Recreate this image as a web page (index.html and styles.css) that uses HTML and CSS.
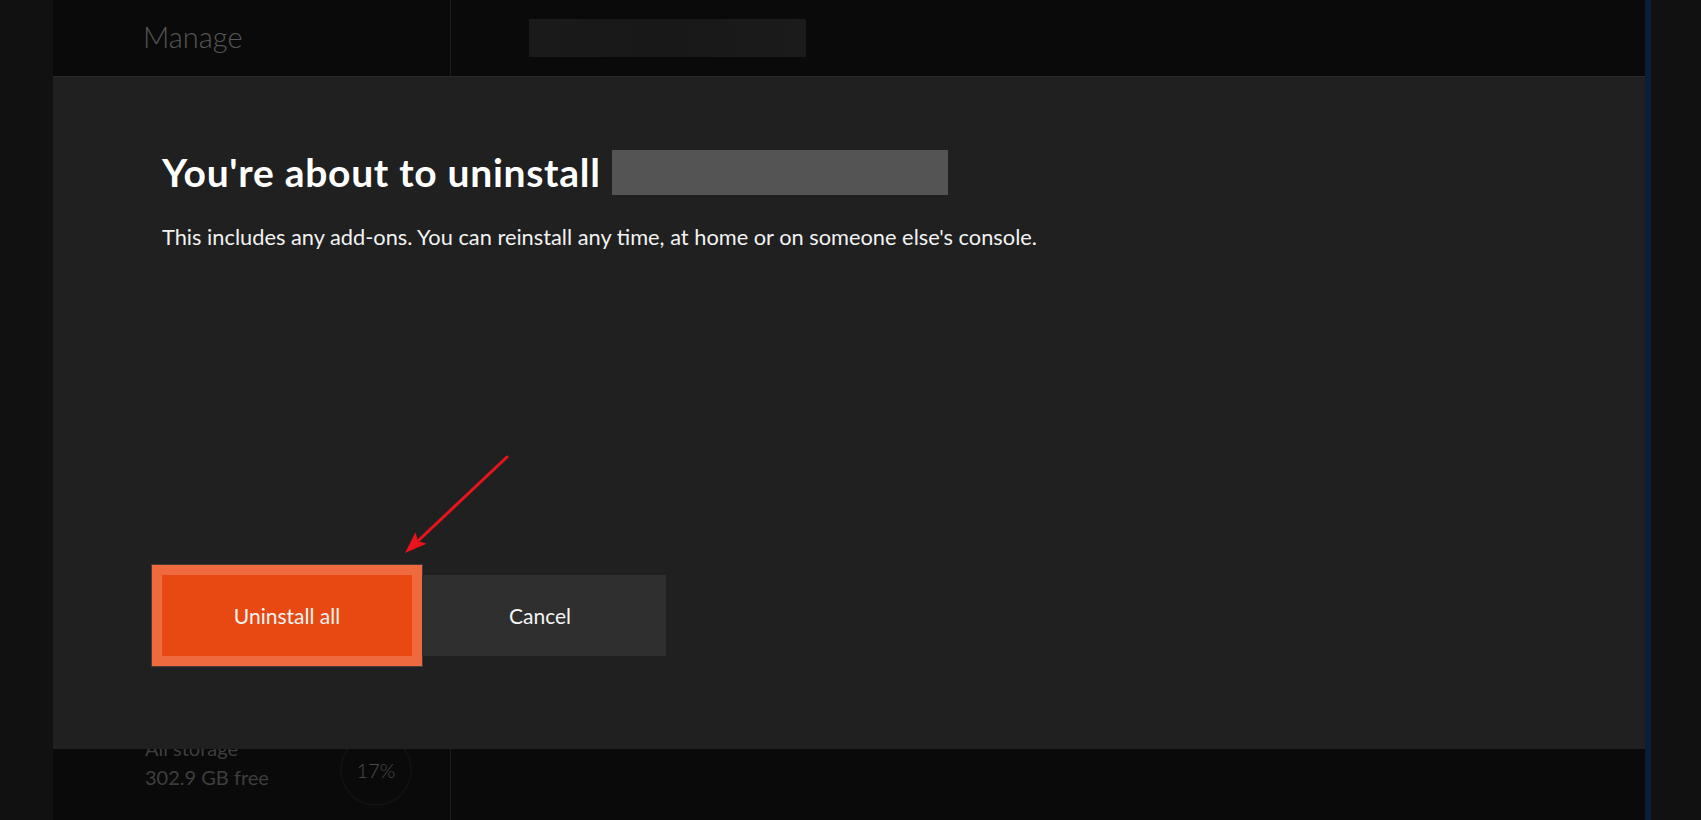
FILE: index.html
```html
<!DOCTYPE html>
<html lang="en">
<head>
<meta charset="utf-8">
<title>Manage - Uninstall</title>
<link rel="stylesheet" href="styles.css">
</head>
<body>
<div class="screen">
  <div class="edge edge-left"></div>
  <div class="app">
    <aside class="sidebar">
      <div class="sidebar-head"><span class="sidebar-title">Manage</span></div>
      <div class="storage">
        <div class="storage-text">
          <div class="storage-name">All storage</div>
          <div class="storage-free">302.9 GB free</div>
        </div>
        <div class="ring">17%</div>
      </div>
    </aside>
    <main class="content">
      <div class="content-head"><div class="placeholder"></div></div>
    </main>
    <section class="dialog" role="dialog" aria-labelledby="dlg-title">
      <div class="dialog-title-row">
        <h1 class="dialog-title" id="dlg-title">You're about to uninstall</h1>
        <div class="redacted"></div>
      </div>
      <p class="dialog-text">This includes any add-ons. You can reinstall any time, at home or on someone else's console.</p>
      <div class="dialog-buttons">
        <button class="btn btn-primary">Uninstall all</button>
        <button class="btn btn-secondary">Cancel</button>
      </div>
    </section>
  </div>
  <div class="edge edge-blue"></div>
  <div class="edge edge-right"></div>
</div>
<svg class="annotation" width="1701" height="820" viewBox="0 0 1701 820" aria-hidden="true">
  <line x1="507" y1="457" x2="419" y2="540" stroke="#e8141b" stroke-width="3" stroke-linecap="round"/>
  <polygon points="405,553 415.5,532.2 418,541 426.5,543.8" fill="#e8141b"/>
</svg>
</body>
</html>
```

FILE: styles.css
```css
* { box-sizing: border-box; }
html, body { margin: 0; padding: 0; }
body {
  width: 1701px;
  height: 820px;
  overflow: hidden;
  background: #111;
  font-family: Lato, "Open Sans", "Liberation Sans", sans-serif;
  position: relative;
}
.screen {
  display: flex;
  height: 820px;
}
.edge-left { width: 53px; background: #111; flex: none; }
.edge-blue { width: 6px; background: #0b1d3d; flex: none; }
.edge-right { width: 50px; background: #111; flex: none; }
.app {
  position: relative;
  width: 1592px;
  flex: none;
  background: #0a0a0a;
  display: flex;
}
.sidebar {
  width: 398px;
  border-right: 1px solid #1c1c1c;
  display: flex;
  flex-direction: column;
  justify-content: space-between;
}
.sidebar-head {
  height: 76px;
  padding-left: 90px;
  display: flex;
  align-items: center;
  padding-bottom: 4px;
}
.sidebar-title {
  font-size: 29px;
  font-weight: 300;
  color: #555;
}
.storage {
  display: flex;
  align-items: flex-start;
  padding-left: 92px;
  padding-bottom: 14px;
}
.storage-text {
  width: 195px;
  font-size: 20px;
  line-height: 29px;
  color: #3e3e3e;
}
.ring {
  width: 72px;
  height: 72px;
  border-radius: 50%;
  border: 2px solid #111;
  display: flex;
  align-items: center;
  justify-content: center;
  font-size: 20px;
  color: #4a4a4a;
  font-weight: 300;
}
.content { flex: 1; }
.content-head {
  height: 76px;
  padding: 19px 0 0 78px;
}
.placeholder {
  width: 277px;
  height: 38px;
  background: linear-gradient(90deg, #1a1a1a, #181818 50%, #1b1b1b);
}
.dialog {
  position: absolute;
  left: 0;
  right: 0;
  top: 76px;
  height: 673px;
  background: #202020;
  border-top: 1px solid #2a2a2a;
  padding: 73px 0 82px 109px;
  display: flex;
  flex-direction: column;
}
.dialog-title-row {
  display: flex;
  align-items: center;
  gap: 11px;
  height: 45px;
}
.dialog-title {
  margin: 0;
  font-size: 39px;
  font-weight: 700;
  letter-spacing: 0.7px;
  color: #fff;
  line-height: 45px;
}
.redacted {
  width: 336px;
  height: 45px;
  background: #545454;
}
.dialog-text {
  margin: 29px 0 0;
  font-size: 21.8px;
  line-height: 26px;
  color: #f2f2f2;
}
.dialog-buttons {
  margin-top: auto;
  display: flex;
  gap: 10px;
  padding-bottom: 11px;
}
.btn {
  border: none;
  height: 81px;
  font-family: inherit;
  font-size: 21px;
  color: #f4f4f4;
  padding: 0;
}
.btn-primary {
  width: 250px;
  background: #e84912;
  outline: 10px solid #ef6b3f;
  box-shadow: 0 0 0 11px #4a3a33;
}
.btn-secondary {
  width: 244px;
  background: #2f2f2f;
  padding-right: 8px;
}
.annotation {
  position: absolute;
  left: 0;
  top: 0;
  pointer-events: none;
}
```
